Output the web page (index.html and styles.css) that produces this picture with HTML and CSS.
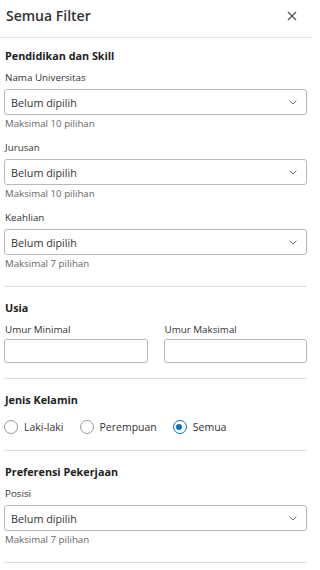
FILE: index.html
```html
<!DOCTYPE html>
<html lang="id">
<head>
<meta charset="utf-8">
<title>Semua Filter</title>
<link rel="stylesheet" href="styles.css">
</head>
<body>
<div class="panel">
  <header class="header">
    <h1 class="title">Semua Filter</h1>
    <button class="close" aria-label="Tutup">
      <svg width="10" height="10" viewBox="0 0 10 10"><path d="M1 1L9 9M9 1L1 9" stroke="#555" stroke-width="1.3" fill="none"/></svg>
    </button>
  </header>

  <section class="section first">
    <h2 class="sec-title">Pendidikan dan Skill</h2>
    <div class="field">
      <label class="label">Nama Universitas</label>
      <div class="select"><span>Belum dipilih</span><svg class="chev" width="8" height="5" viewBox="0 0 8 5"><path d="M0.6 0.6L4 4L7.4 0.6" stroke="#777" stroke-width="1" fill="none"/></svg></div>
      <div class="help">Maksimal 10 pilihan</div>
    </div>
    <div class="field">
      <label class="label">Jurusan</label>
      <div class="select"><span>Belum dipilih</span><svg class="chev" width="8" height="5" viewBox="0 0 8 5"><path d="M0.6 0.6L4 4L7.4 0.6" stroke="#777" stroke-width="1" fill="none"/></svg></div>
      <div class="help">Maksimal 10 pilihan</div>
    </div>
    <div class="field">
      <label class="label">Keahlian</label>
      <div class="select"><span>Belum dipilih</span><svg class="chev" width="8" height="5" viewBox="0 0 8 5"><path d="M0.6 0.6L4 4L7.4 0.6" stroke="#777" stroke-width="1" fill="none"/></svg></div>
      <div class="help">Maksimal 7 pilihan</div>
    </div>
  </section>

  <section class="section">
    <h2 class="sec-title">Usia</h2>
    <div class="age-grid">
      <div class="age-col">
        <label class="label tight">Umur Minimal</label>
        <div class="input"></div>
      </div>
      <div class="age-col">
        <label class="label tight">Umur Maksimal</label>
        <div class="input"></div>
      </div>
    </div>
  </section>

  <section class="section">
    <h2 class="sec-title">Jenis Kelamin</h2>
    <div class="radios">
      <div class="radio"><span class="circle"></span><span>Laki-laki</span></div>
      <div class="radio"><span class="circle"></span><span>Perempuan</span></div>
      <div class="radio"><span class="circle on"></span><span>Semua</span></div>
    </div>
  </section>

  <section class="section">
    <h2 class="sec-title">Preferensi Pekerjaan</h2>
    <div class="field">
      <label class="label">Posisi</label>
      <div class="select"><span>Belum dipilih</span><svg class="chev" width="8" height="5" viewBox="0 0 8 5"><path d="M0.6 0.6L4 4L7.4 0.6" stroke="#777" stroke-width="1" fill="none"/></svg></div>
      <div class="help">Maksimal 7 pilihan</div>
    </div>
  </section>
</div>
</body>
</html>
```

FILE: styles.css
```css
* { box-sizing: border-box; }
html, body { margin: 0; padding: 0; background: #fff; }
body {
  font-family: "Open Sans", "Noto Sans", Arial, sans-serif;
  color: #333;
}
.panel { width: 313px; }
.header {
  display: flex;
  align-items: center;
  justify-content: space-between;
  height: 38px;
  padding: 0 16px 5px 6px;
  border-bottom: 1px solid #e6e6e6;
}
.title {
  margin: 0;
  font-size: 14px;
  font-weight: 600;
  color: #333;
  line-height: 20px;
}
.close {
  border: 0;
  background: none;
  padding: 0;
  width: 10px;
  height: 10px;
  display: flex;
}
.section {
  margin: 0 6px 0 4px;
  padding: 13px 0 15px;
  border-bottom: 1px solid #dcdcdc;
}
.section.first { padding-top: 10px; }
.sec-title {
  margin: 0 0 7px 1px;
  font-size: 10.8px;
  font-weight: 700;
  line-height: 16px;
  color: #222;
}
.field { display: flex; flex-direction: column; }
.field + .field { margin-top: 10px; }
.label {
  font-size: 9.8px;
  line-height: 14px;
  color: #333;
  margin: 0 0 4px 1px;
}
.label.tight { margin-bottom: 2px; }
.select {
  height: 26px;
  border: 1px solid #b8b8b8;
  border-radius: 3px;
  display: flex;
  align-items: center;
  justify-content: space-between;
  padding: 0 9px 0 6px;
  font-size: 10.8px;
  color: #333;
}
.chev { display: block; }
.help {
  font-size: 9.7px;
  line-height: 14px;
  color: #666;
  margin: 2px 0 0 1px;
}
.age-grid {
  display: grid;
  grid-template-columns: 1fr 1fr;
  column-gap: 16px;
}
.age-col { display: flex; flex-direction: column; }
.input {
  height: 24px;
  border: 1px solid #b8b8b8;
  border-radius: 3px;
}
.radios {
  display: flex;
  gap: 16px;
  align-items: center;
  padding-top: 4px;
  padding-bottom: 0;
}
.radio {
  display: flex;
  align-items: center;
  gap: 6px;
  font-size: 10.5px;
  color: #333;
  line-height: 16px;
}
.circle {
  width: 14px;
  height: 14px;
  border-radius: 50%;
  border: 1px solid #9a9a9a;
  display: inline-block;
  position: relative;
}
.circle.on {
  border: 1.5px solid #0b6fc2;
}
.circle.on::after {
  content: "";
  position: absolute;
  left: 2.5px;
  top: 2.5px;
  width: 6px;
  height: 6px;
  border-radius: 50%;
  background: #0b6fc2;
}
```
